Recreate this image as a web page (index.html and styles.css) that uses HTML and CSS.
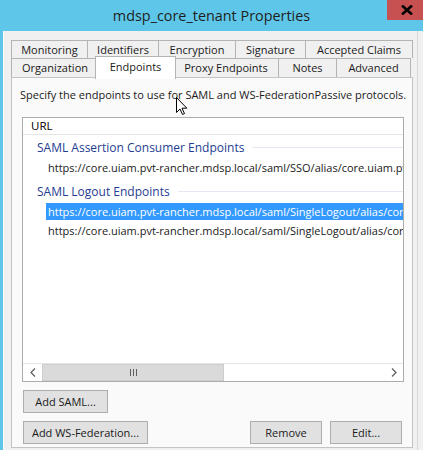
FILE: index.html
```html
<!DOCTYPE html>
<html>
<head>
<meta charset="utf-8">
<link rel="stylesheet" href="styles.css">
</head>
<body>
<div class="window">
  <div class="titlebar">
    <span></span>
    <span class="title">mdsp_core_tenant Properties</span>
    <span class="close"><svg width="12" height="10" viewBox="0 0 12 10"><path d="M1 0.5 L11 9.5 M11 0.5 L1 9.5" stroke="#000" stroke-width="2.6"/></svg></span>
  </div>
  <div class="frame">
    <div class="dialog">
      <div class="tabs">
        <div class="tabrow">
          <div class="tab w-mon">Monitoring</div>
          <div class="tab w-ide">Identifiers</div>
          <div class="tab w-enc">Encryption</div>
          <div class="tab w-sig">Signature</div>
          <div class="tab w-acc">Accepted Claims</div>
        </div>
        <div class="tabrow row2">
          <div class="tab w-org">Organization</div>
          <div class="tab sel w-end">Endpoints</div>
          <div class="tab w-pro">Proxy Endpoints</div>
          <div class="tab w-not">Notes</div>
          <div class="tab w-adv">Advanced</div>
        </div>
      </div>
      <div class="panel">
        <div class="desc">Specify the endpoints to use for SAML and WS-FederationPassive protocols.</div>
        <div class="listview">
          <div class="lvhead">URL</div>
          <div class="lvbody">
            <div class="group">
              <div class="gtitle"><span>SAML Assertion Consumer Endpoints</span></div>
              <div class="item">https://core.uiam.pvt-rancher.mdsp.local/saml/SSO/alias/core.uiam.pvt-rancher.mdsp.local</div>
            </div>
            <div class="group">
              <div class="gtitle"><span>SAML Logout Endpoints</span></div>
              <div class="item selected">https://core.uiam.pvt-rancher.mdsp.local/saml/SingleLogout/alias/core.uiam.pvt-rancher</div>
              <div class="item">https://core.uiam.pvt-rancher.mdsp.local/saml/SingleLogout/alias/core.uiam.pvt-rancher</div>
            </div>
          </div>
          <div class="hscroll">
            <div class="sbtn"><svg width="6" height="9" viewBox="0 0 6 9"><path d="M5 0.5 L1 4.5 L5 8.5" fill="none" stroke="#606060" stroke-width="1.3"/></svg></div>
            <div class="thumb"><svg width="7" height="7" viewBox="0 0 7 7"><path d="M0.5 0 V7 M3.5 0 V7 M6.5 0 V7" stroke="#606060" stroke-width="1"/></svg></div>
            <div class="track"></div>
            <div class="sbtn"><svg width="6" height="9" viewBox="0 0 6 9"><path d="M1 0.5 L5 4.5 L1 8.5" fill="none" stroke="#606060" stroke-width="1.3"/></svg></div>
          </div>
        </div>
        <div class="btnrow">
          <button class="btn w-addsaml">Add SAML...</button>
        </div>
        <div class="btnrow">
          <button class="btn w-addws">Add WS-Federation...</button>
          <span class="spacer"></span>
          <button class="btn w-rem">Remove</button>
          <button class="btn w-edit">Edit...</button>
        </div>
      </div>
    </div>
  </div>
  <svg class="cursor" width="12" height="19" viewBox="0 0 12 19"><path d="M0.5 0.5 L0.5 15.5 L4 12 L6.5 17.5 L8.5 16.6 L6 11.2 L10.8 11.2 Z" fill="#fff" stroke="#000" stroke-width="1" stroke-linejoin="round"/></svg>
</div>
</body>
</html>
```
FILE: styles.css
```css
* { box-sizing: border-box; }
html, body { margin: 0; padding: 0; }
body {
  width: 423px;
  height: 450px;
  overflow: hidden;
  background: #f0f0f0;
  font-family: "Open Sans", "Noto Sans", sans-serif;
  font-size: 11px;
  color: #000;
}
.window { position: relative; width: 423px; height: 450px; display: flex; flex-direction: column; }
.titlebar {
  height: 31px;
  flex: 0 0 31px;
  background: #5ec7e9;
  display: grid;
  grid-template-columns: 1fr auto 1fr;
}
.title {
  font-size: 14.4px;
  color: #1e1e1e;
  line-height: 31px;
}
.close {
  justify-self: end;
  width: 36px;
  height: 20px;
  background: #c75050;
  display: flex;
  align-items: center;
  justify-content: center;
  padding-left: 4px;
}
.frame {
  flex: 1;
  border-left: 3px solid #5ec7e9;
  display: flex;
}
.dialog {
  width: 415px;
  border-left: 1px solid #fafafa;
  border-right: 1px solid #d8d8d8;
  padding: 9px 0 0 7px;
  display: flex;
  flex-direction: column;
}
.tabs { display: flex; flex-direction: column; }
.tabrow { display: flex; height: 18px; }
.tabrow.row2 { height: 19px; }
.tab {
  border: 1px solid #b4b4b4;
  border-bottom: none;
  margin-right: -1px;
  background: #f0f0f0;
  text-align: center;
  line-height: 17px;
  white-space: nowrap;
  color: #1a1a1a;
}
.tab.sel {
  position: relative;
  z-index: 2;
  background: #ffffff;
  margin: -2px -3px -2px -3px;
  line-height: 19px;
}
.w-mon { width: 77px; }
.w-ide { width: 72px; }
.w-enc { width: 78px; }
.w-sig { width: 71px; }
.w-acc { width: 108px; }
.w-org { width: 88px; }
.w-end { width: 81px; }
.w-pro { width: 106px; }
.w-not { width: 59px; }
.w-adv { width: 75px; }
.panel {
  width: 402px;
  height: 371px;
  border: 1px solid #c4c4c4;
  background: #fafafa;
  padding: 9px 0 0 10px;
  display: flex;
  flex-direction: column;
}
.desc { margin-left: -2px; line-height: 16px; white-space: nowrap; color: #1a1a1a; }
.listview {
  margin-top: 14px;
  width: 382px;
  height: 265px;
  border: 1px solid #acacac;
  background: #fff;
  display: flex;
  flex-direction: column;
  overflow: hidden;
}
.lvhead {
  height: 17px;
  flex: 0 0 17px;
  border-bottom: 1px solid #e5e5e5;
  padding-left: 8px;
  line-height: 16px;
  font-size: 11.5px;
}
.lvbody { flex: 1; overflow: hidden; padding-top: 2px; }
.group { margin-bottom: 5px; }
.gtitle {
  height: 20px;
  display: flex;
  align-items: center;
  padding-left: 14px;
  color: #1f3d92;
  font-size: 12px;
  white-space: nowrap;
}
.gtitle::after {
  content: "";
  flex: 1;
  margin-left: 8px;
  border-top: 1px solid #e3e8f1;
}
.item {
  margin: 2px 0 0 23px;
  padding-left: 2px;
  height: 17px;
  line-height: 17px;
  white-space: nowrap;
  color: #1a1a1a;
}
.item.selected { background: #3399ff; color: #fff; }
.hscroll {
  flex: 0 0 18px;
  height: 18px;
  display: flex;
  border-top: 1px solid #e6e6e6;
}
.sbtn { width: 19px; display: flex; align-items: center; justify-content: center; background: #fff; }
.thumb {
  width: 182px;
  background: #dadada;
  border: 1px solid #cdcdcd;
  display: flex;
  align-items: center;
  justify-content: center;
}
.track { flex: 1; background: #fff; }
.btnrow { display: flex; margin-top: 8px; padding-left: 1px; gap: 8px; }
.spacer { flex: 1; }
.btn {
  height: 23px;
  border: 1px solid #adadad;
  background: #e1e1e1;
  font-family: "Open Sans", "Noto Sans", sans-serif;
  font-size: 11px;
  color: #1a1a1a;
  padding: 0;
}
.w-addsaml { width: 85px; }
.w-addws { width: 125px; }
.w-rem { width: 72px; }
.w-edit { width: 72px; margin-right: 10px; }
.cursor { position: absolute; left: 176px; top: 97px; }
```
